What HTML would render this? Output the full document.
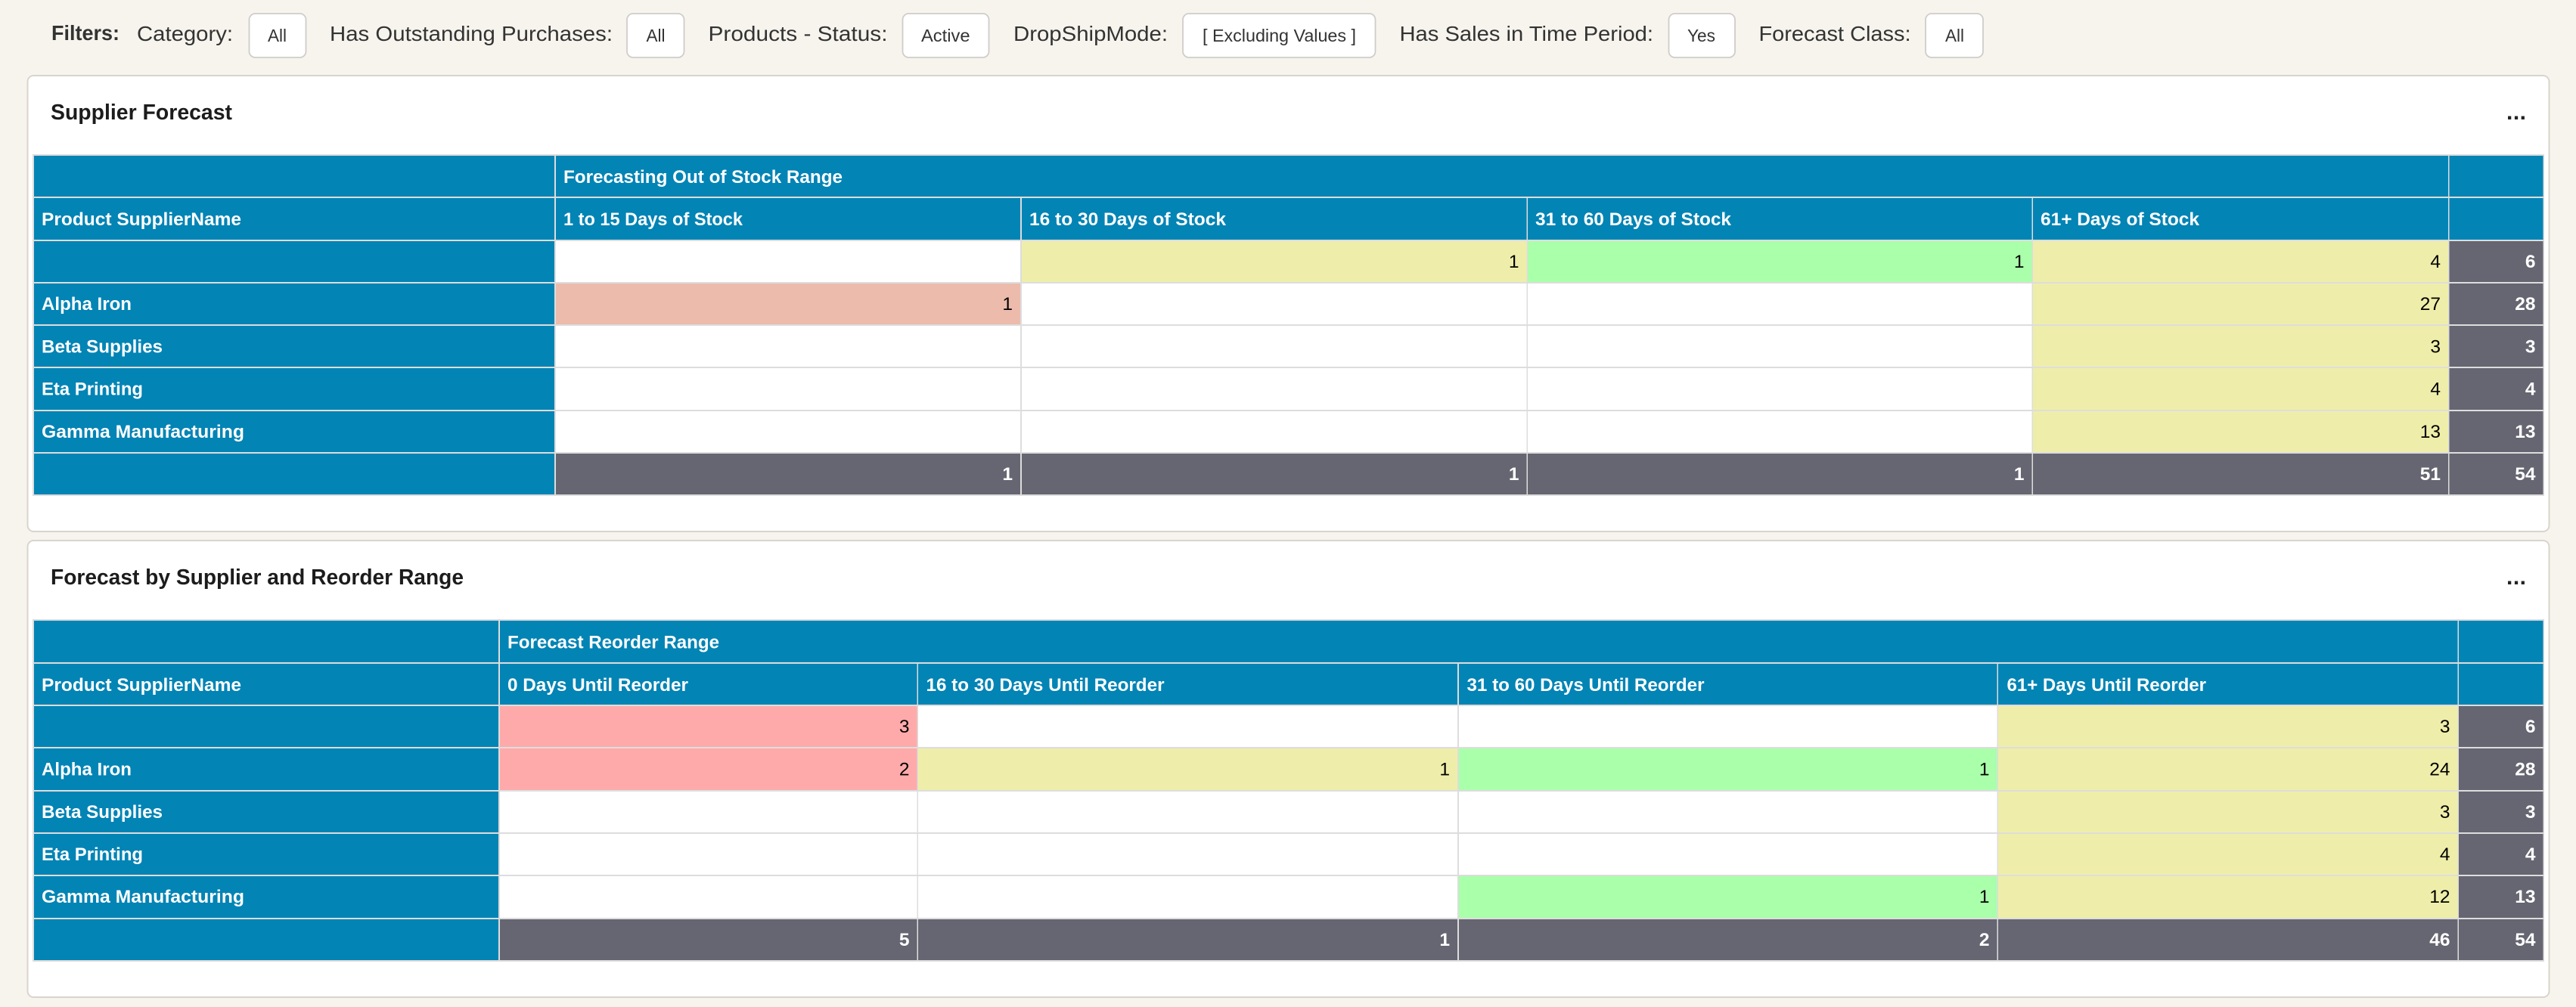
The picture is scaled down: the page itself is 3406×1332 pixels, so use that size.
<!DOCTYPE html>
<html lang="en">
<head>
<meta charset="utf-8">
<title>Supplier Forecast</title>
<style>
html,body{margin:0;padding:0;width:3406px;height:1332px;overflow:hidden;background:#f7f4ed}
svg{display:block}
text{font-family:"Liberation Sans",Arial,sans-serif}
.l{font-size:28px;fill:#333}
.f{font-size:28px;font-weight:700;fill:#333}
.b{font-size:23px;fill:#333}
.t{font-size:29px;font-weight:700;fill:#1c1c1c}
.h{font-size:24.5px;font-weight:700;fill:#fff}
.n{font-size:24.5px;fill:#000;text-anchor:end}
.g{font-size:24.5px;font-weight:700;fill:#fff;text-anchor:end}
.btn{fill:#fff;stroke:#cfcdca;stroke-width:1.8}
.panel{fill:#fff;stroke:#d8d5cd;stroke-width:2}
</style>
</head>
<body>
<svg xmlns="http://www.w3.org/2000/svg" width="3406" height="1332" viewBox="0 0 3406 1332">
<rect width="3406" height="1332" fill="#f7f4ed"/>

<!-- Filter bar -->
<text class="f" x="68" y="53" textLength="90" lengthAdjust="spacingAndGlyphs">Filters:</text>
<text class="l" x="181" y="54" textLength="127" lengthAdjust="spacingAndGlyphs">Category:</text>
<rect class="btn" x="329.5" y="18" width="75" height="58" rx="8"/>
<text class="b" x="354" y="55" textLength="25" lengthAdjust="spacingAndGlyphs">All</text>
<text class="l" x="436" y="54" textLength="374" lengthAdjust="spacingAndGlyphs">Has Outstanding Purchases:</text>
<rect class="btn" x="829" y="18" width="75.5" height="58" rx="8"/>
<text class="b" x="854.5" y="55" textLength="25" lengthAdjust="spacingAndGlyphs">All</text>
<text class="l" x="936.5" y="54" textLength="237" lengthAdjust="spacingAndGlyphs">Products - Status:</text>
<rect class="btn" x="1193.5" y="18" width="114" height="58" rx="8"/>
<text class="b" x="1218" y="55" textLength="64.5" lengthAdjust="spacingAndGlyphs">Active</text>
<text class="l" x="1340" y="54" textLength="204" lengthAdjust="spacingAndGlyphs">DropShipMode:</text>
<rect class="btn" x="1564" y="18" width="254.5" height="58" rx="8"/>
<text class="b" x="1590" y="55" textLength="203" lengthAdjust="spacingAndGlyphs">[ Excluding Values ]</text>
<text class="l" x="1850.5" y="54" textLength="335.5" lengthAdjust="spacingAndGlyphs">Has Sales in Time Period:</text>
<rect class="btn" x="2206.5" y="18" width="87.5" height="58" rx="8"/>
<text class="b" x="2231" y="55" textLength="37" lengthAdjust="spacingAndGlyphs">Yes</text>
<text class="l" x="2325.5" y="54" textLength="201" lengthAdjust="spacingAndGlyphs">Forecast Class:</text>
<rect class="btn" x="2546" y="18" width="76" height="58" rx="8"/>
<text class="b" x="2572" y="55" textLength="25" lengthAdjust="spacingAndGlyphs">All</text>

<!-- Panel 1 -->
<rect class="panel" x="36.5" y="100" width="3334" height="603" rx="8"/>
<text class="t" x="67" y="158" textLength="240" lengthAdjust="spacingAndGlyphs">Supplier Forecast</text>
<text x="3314" y="158" font-size="30" font-weight="700" fill="#222" textLength="26" lengthAdjust="spacing">...</text>

<rect x="43" y="204" width="3321" height="452" fill="#dddddd"/>
<g fill="#0284b5">
<rect x="45" y="206" width="688" height="54"/><rect x="735" y="206" width="2502" height="54"/><rect x="3238.5" y="206" width="124" height="54"/>
<rect x="45" y="262" width="688" height="55"/><rect x="735" y="262" width="614" height="55"/><rect x="1351" y="262" width="667.5" height="55"/><rect x="2020" y="262" width="666.5" height="55"/><rect x="2688" y="262" width="549" height="55"/><rect x="3238.5" y="262" width="124" height="55"/>
<rect x="45" y="319" width="688" height="54"/><rect x="45" y="375" width="688" height="54"/><rect x="45" y="431" width="688" height="54"/><rect x="45" y="487" width="688" height="55"/><rect x="45" y="544" width="688" height="54"/><rect x="45" y="600" width="688" height="54"/>
</g>
<!-- white cells -->
<g fill="#ffffff">
<rect x="735" y="319" width="614" height="54"/>
<rect x="1351" y="375" width="667.5" height="54"/><rect x="2020" y="375" width="666.5" height="54"/>
<rect x="735" y="431" width="614" height="54"/><rect x="1351" y="431" width="667.5" height="54"/><rect x="2020" y="431" width="666.5" height="54"/>
<rect x="735" y="487" width="614" height="55"/><rect x="1351" y="487" width="667.5" height="55"/><rect x="2020" y="487" width="666.5" height="55"/>
<rect x="735" y="544" width="614" height="54"/><rect x="1351" y="544" width="667.5" height="54"/><rect x="2020" y="544" width="666.5" height="54"/>
</g>
<rect x="735" y="375" width="614" height="54" fill="#edbbab"/>
<rect x="2020" y="319" width="666.5" height="54" fill="#aaffaa"/>
<g fill="#eeeeaa">
<rect x="1351" y="319" width="667.5" height="54"/>
<rect x="2688" y="319" width="549" height="54"/><rect x="2688" y="375" width="549" height="54"/><rect x="2688" y="431" width="549" height="54"/><rect x="2688" y="487" width="549" height="55"/><rect x="2688" y="544" width="549" height="54"/>
</g>
<g fill="#666672">
<rect x="3238.5" y="319" width="124" height="54"/><rect x="3238.5" y="375" width="124" height="54"/><rect x="3238.5" y="431" width="124" height="54"/><rect x="3238.5" y="487" width="124" height="55"/><rect x="3238.5" y="544" width="124" height="54"/>
<rect x="735" y="600" width="614" height="54"/><rect x="1351" y="600" width="667.5" height="54"/><rect x="2020" y="600" width="666.5" height="54"/><rect x="2688" y="600" width="549" height="54"/><rect x="3238.5" y="600" width="124" height="54"/>
</g>

<text class="h" x="745" y="242" textLength="369" lengthAdjust="spacingAndGlyphs">Forecasting Out of Stock Range</text>
<text class="h" x="55" y="298" textLength="264" lengthAdjust="spacingAndGlyphs">Product SupplierName</text>
<text class="h" x="745" y="298" textLength="237" lengthAdjust="spacingAndGlyphs">1 to 15 Days of Stock</text>
<text class="h" x="1361" y="298" textLength="260" lengthAdjust="spacingAndGlyphs">16 to 30 Days of Stock</text>
<text class="h" x="2030" y="298" textLength="259" lengthAdjust="spacingAndGlyphs">31 to 60 Days of Stock</text>
<text class="h" x="2698" y="298" textLength="210" lengthAdjust="spacingAndGlyphs">61+ Days of Stock</text>
<text class="h" x="55" y="410" textLength="119" lengthAdjust="spacingAndGlyphs">Alpha Iron</text>
<text class="h" x="55" y="466.5" textLength="160" lengthAdjust="spacingAndGlyphs">Beta Supplies</text>
<text class="h" x="55" y="522.5" textLength="134" lengthAdjust="spacingAndGlyphs">Eta Printing</text>
<text class="h" x="55" y="579" textLength="268" lengthAdjust="spacingAndGlyphs">Gamma Manufacturing</text>

<text class="n" x="2008.5" y="354">1</text><text class="n" x="2676.5" y="354">1</text><text class="n" x="3227" y="354">4</text><text class="g" x="3352.5" y="354">6</text>
<text class="n" x="1339" y="410">1</text><text class="n" x="3227" y="410">27</text><text class="g" x="3352.5" y="410">28</text>
<text class="n" x="3227" y="466.5">3</text><text class="g" x="3352.5" y="466.5">3</text>
<text class="n" x="3227" y="522.5">4</text><text class="g" x="3352.5" y="522.5">4</text>
<text class="n" x="3227" y="579">13</text><text class="g" x="3352.5" y="579">13</text>
<text class="g" x="1339" y="635">1</text><text class="g" x="2008.5" y="635">1</text><text class="g" x="2676.5" y="635">1</text><text class="g" x="3227" y="635">51</text><text class="g" x="3352.5" y="635">54</text>

<!-- Panel 2 -->
<rect class="panel" x="36.5" y="715" width="3334" height="604" rx="8"/>
<text class="t" x="67" y="773" textLength="546" lengthAdjust="spacingAndGlyphs">Forecast by Supplier and Reorder Range</text>
<text x="3314" y="773" font-size="30" font-weight="700" fill="#222" textLength="26" lengthAdjust="spacing">...</text>

<rect x="43" y="819" width="3321" height="453" fill="#dddddd"/>
<g fill="#0284b5">
<rect x="45" y="821" width="614" height="55"/><rect x="661" y="821" width="2588.5" height="55"/><rect x="3251" y="821" width="111.5" height="55"/>
<rect x="45" y="878" width="614" height="54"/><rect x="661" y="878" width="551.5" height="54"/><rect x="1214" y="878" width="713" height="54"/><rect x="1929" y="878" width="711.5" height="54"/><rect x="2642" y="878" width="607.5" height="54"/><rect x="3251" y="878" width="111.5" height="54"/>
<rect x="45" y="934" width="614" height="54"/><rect x="45" y="990" width="614" height="55"/><rect x="45" y="1047" width="614" height="54"/><rect x="45" y="1103" width="614" height="54"/><rect x="45" y="1159" width="614" height="55"/><rect x="45" y="1216" width="614" height="54"/>
</g>
<g fill="#ffffff">
<rect x="1214" y="934" width="713" height="54"/><rect x="1929" y="934" width="711.5" height="54"/>
<rect x="661" y="1047" width="551.5" height="54"/><rect x="1214" y="1047" width="713" height="54"/><rect x="1929" y="1047" width="711.5" height="54"/>
<rect x="661" y="1103" width="551.5" height="54"/><rect x="1214" y="1103" width="713" height="54"/><rect x="1929" y="1103" width="711.5" height="54"/>
<rect x="661" y="1159" width="551.5" height="55"/><rect x="1214" y="1159" width="713" height="55"/>
</g>
<g fill="#ffaaaa">
<rect x="661" y="934" width="551.5" height="54"/><rect x="661" y="990" width="551.5" height="55"/>
</g>
<g fill="#aaffaa">
<rect x="1929" y="990" width="711.5" height="55"/><rect x="1929" y="1159" width="711.5" height="55"/>
</g>
<g fill="#eeeeaa">
<rect x="1214" y="990" width="713" height="55"/>
<rect x="2642" y="934" width="607.5" height="54"/><rect x="2642" y="990" width="607.5" height="55"/><rect x="2642" y="1047" width="607.5" height="54"/><rect x="2642" y="1103" width="607.5" height="54"/><rect x="2642" y="1159" width="607.5" height="55"/>
</g>
<g fill="#666672">
<rect x="3251" y="934" width="111.5" height="54"/><rect x="3251" y="990" width="111.5" height="55"/><rect x="3251" y="1047" width="111.5" height="54"/><rect x="3251" y="1103" width="111.5" height="54"/><rect x="3251" y="1159" width="111.5" height="55"/>
<rect x="661" y="1216" width="551.5" height="54"/><rect x="1214" y="1216" width="713" height="54"/><rect x="1929" y="1216" width="711.5" height="54"/><rect x="2642" y="1216" width="607.5" height="54"/><rect x="3251" y="1216" width="111.5" height="54"/>
</g>

<text class="h" x="671" y="857.5" textLength="280" lengthAdjust="spacingAndGlyphs">Forecast Reorder Range</text>
<text class="h" x="55" y="914" textLength="264" lengthAdjust="spacingAndGlyphs">Product SupplierName</text>
<text class="h" x="671" y="914" textLength="239" lengthAdjust="spacingAndGlyphs">0 Days Until Reorder</text>
<text class="h" x="1224.5" y="914" textLength="315" lengthAdjust="spacingAndGlyphs">16 to 30 Days Until Reorder</text>
<text class="h" x="1939.5" y="914" textLength="314" lengthAdjust="spacingAndGlyphs">31 to 60 Days Until Reorder</text>
<text class="h" x="2653.5" y="914" textLength="263.5" lengthAdjust="spacingAndGlyphs">61+ Days Until Reorder</text>
<text class="h" x="55" y="1025.5" textLength="119" lengthAdjust="spacingAndGlyphs">Alpha Iron</text>
<text class="h" x="55" y="1082" textLength="160" lengthAdjust="spacingAndGlyphs">Beta Supplies</text>
<text class="h" x="55" y="1138" textLength="134" lengthAdjust="spacingAndGlyphs">Eta Printing</text>
<text class="h" x="55" y="1194" textLength="268" lengthAdjust="spacingAndGlyphs">Gamma Manufacturing</text>

<text class="n" x="1202.5" y="969">3</text><text class="n" x="3239.5" y="969">3</text><text class="g" x="3352.5" y="969">6</text>
<text class="n" x="1202.5" y="1025.5">2</text><text class="n" x="1917" y="1025.5">1</text><text class="n" x="2630.5" y="1025.5">1</text><text class="n" x="3239.5" y="1025.5">24</text><text class="g" x="3352.5" y="1025.5">28</text>
<text class="n" x="3239.5" y="1082">3</text><text class="g" x="3352.5" y="1082">3</text>
<text class="n" x="3239.5" y="1138">4</text><text class="g" x="3352.5" y="1138">4</text>
<text class="n" x="2630.5" y="1194">1</text><text class="n" x="3239.5" y="1194">12</text><text class="g" x="3352.5" y="1194">13</text>
<text class="g" x="1202.5" y="1251">5</text><text class="g" x="1917" y="1251">1</text><text class="g" x="2630.5" y="1251">2</text><text class="g" x="3239.5" y="1251">46</text><text class="g" x="3352.5" y="1251">54</text>
</svg>
</body>
</html>
